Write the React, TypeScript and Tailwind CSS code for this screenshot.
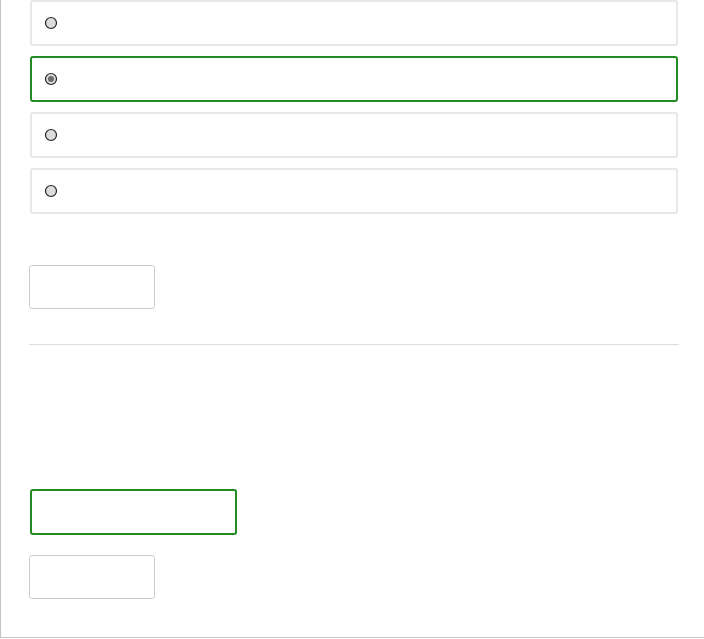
const options = [false, true, false, false]

function Radio({ checked }: { checked: boolean }) {
  return (
    <svg width="14" height="14" viewBox="0 0 14 14" className="shrink-0">
      <circle cx="7" cy="7" r="5.5" fill="#dcdcdc" stroke="#222" strokeWidth="1.2" />
      {checked && <circle cx="7" cy="7" r="3" fill="#6b6b6b" />}
    </svg>
  )
}

export default function App() {
  return (
    <div className="h-[638px] w-[704px] border-b border-l border-[#c4c4c4] bg-white font-['Liberation_Sans',sans-serif]">
      <div className="flex flex-col gap-[10px] pl-[28px]">
        {options.map((checked, i) => (
          <label
            key={i}
            className={
              checked
                ? 'ml-px flex h-[46px] w-[648px] items-center rounded-[3px] border-2 border-[#228b22] pl-[12px]'
                : 'ml-px flex h-[46px] w-[648px] items-center rounded-[3px] border-2 border-[#e8e8e8] pl-[12px]'
            }
          >
            <Radio checked={checked} />
          </label>
        ))}
      </div>

      <div className="mt-[51px] pl-[28px]">
        <button className="block h-[44px] w-[126px] rounded-[3px] border border-[#cccccc] bg-white" />
      </div>

      <div className="mt-[35px] ml-[28px] h-px w-[650px] bg-[#dddddd]" />

      <div className="mt-[144px] pl-[29px]">
        <div className="h-[46px] w-[207px] rounded-[3px] border-2 border-[#228b22]" />
      </div>

      <div className="mt-[20px] pl-[28px]">
        <button className="block h-[44px] w-[126px] rounded-[3px] border border-[#cccccc] bg-white" />
      </div>
    </div>
  )
}
